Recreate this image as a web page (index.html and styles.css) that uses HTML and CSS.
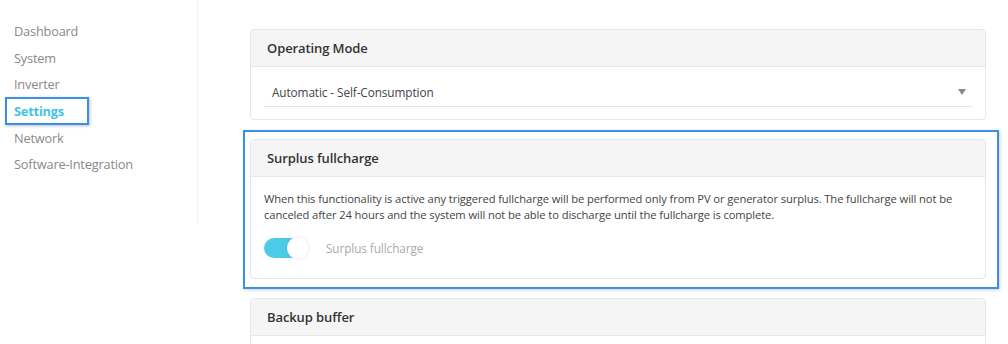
FILE: index.html
```html
<!DOCTYPE html>
<html lang="en">
<head>
    <meta charset="UTF-8">
    <title>Settings</title>
    <link rel="stylesheet" href="styles.css">
</head>
<body>
<div class="layout">
    <nav class="sidebar">
        <a class="nav-item">Dashboard</a>
        <a class="nav-item">System</a>
        <a class="nav-item">Inverter</a>
        <a class="nav-item active">Settings<span class="mark"></span></a>
        <a class="nav-item">Network</a>
        <a class="nav-item">Software-Integration</a>
    </nav>

    <main class="content">
        <div class="card">
            <div class="card-header">Operating Mode</div>
            <div class="card-body">
                <div class="select">
                    <span>Automatic - Self-Consumption</span>
                    <span class="caret"></span>
                </div>
            </div>
        </div>

        <div class="card">
            <span class="highlight"></span>
            <div class="card-header">Surplus fullcharge</div>
            <div class="card-body text-body">
                <p class="desc">When this functionality is active any triggered fullcharge will be performed only from PV or generator surplus. The fullcharge will not be canceled after 24 hours and the system will not be able to discharge until the fullcharge is complete.</p>
                <label class="switch-row">
                    <span class="switch"><span class="knob"></span></span>
                    <span class="switch-label">Surplus fullcharge</span>
                </label>
            </div>
        </div>

        <div class="card">
            <div class="card-header">Backup buffer</div>
            <div class="card-body"></div>
        </div>
    </main>
</div>
</body>
</html>
```

FILE: styles.css
```css
*{
    box-sizing: border-box;
    font-family: 'Open Sans', 'Noto Sans', sans-serif;
}
body{
    margin: 0;
    background-color: #ffffff;
    color: #333;
    overflow: hidden;
}
.layout{
    display: flex;
    align-items: flex-start;
}
.sidebar{
    width: 198px;
    height: 224px;
    border-right: 1px solid #f0f0f0;
    padding-top: 21px;
    display: flex;
    flex-direction: column;
}
.nav-item{
    position: relative;
    display: block;
    padding-left: 14px;
    height: 26.7px;
    line-height: 20px;
    font-size: 12.8px;
    color: #8a8a8a;
    letter-spacing: -0.2px;
}
.nav-item.active{
    color: #3fc3ea;
    font-weight: 700;
}
.mark{
    position: absolute;
    left: 5px;
    top: -4px;
    width: 84px;
    height: 28px;
    border: 2px solid #3a8fe8;
    box-shadow: 1px 1px 3px rgba(0, 0, 0, 0.25);
}
.content{
    margin-left: 52px;
    margin-top: 29px;
    width: 736px;
    display: flex;
    flex-direction: column;
    gap: 19px;
}
.card{
    position: relative;
    border: 1px solid #e6e6e6;
    border-radius: 4px;
    background-color: #fff;
}
.card-header{
    height: 37px;
    line-height: 36px;
    padding-left: 16px;
    background-color: #f5f5f5;
    border-bottom: 1px solid #e8e8e8;
    border-radius: 4px 4px 0 0;
    font-size: 13px;
    font-weight: 600;
    color: #333;
    letter-spacing: -0.1px;
}
.card-body{
    padding: 13px 13px 12px 13px;
    min-height: 20px;
}
.select{
    display: flex;
    justify-content: space-between;
    align-items: center;
    height: 27px;
    padding: 0 6px 2px 8px;
    border-bottom: 1px solid #e4e4e4;
    font-size: 11.8px;
    color: #444;
    letter-spacing: -0.1px;
}
.caret{
    width: 0;
    height: 0;
    border-left: 4px solid transparent;
    border-right: 4px solid transparent;
    border-top: 6px solid #888;
}
.text-body{
    padding: 14px 13px 20px 13px;
}
.desc{
    margin: 0;
    font-size: 11.2px;
    line-height: 16px;
    color: #444;
    letter-spacing: -0.1px;
}
.switch-row{
    display: flex;
    align-items: center;
    gap: 18px;
    margin-top: 15px;
}
.switch{
    position: relative;
    width: 44px;
    height: 20px;
    border-radius: 10px;
    background-color: #4ccbe9;
}
.knob{
    position: absolute;
    right: -1px;
    top: -1px;
    width: 22px;
    height: 22px;
    border-radius: 50%;
    background-color: #fff;
    box-shadow: 0 0 2px rgba(0, 0, 0, 0.15);
}
.switch-label{
    font-size: 11.8px;
    color: #aaa;
    letter-spacing: -0.1px;
}
.highlight{
    position: absolute;
    left: -8px;
    right: -14px;
    top: -10px;
    bottom: -11px;
    border: 2px solid #3a8fe8;
    box-shadow: 1px 1px 3px rgba(0, 0, 0, 0.2);
    pointer-events: none;
}
```
